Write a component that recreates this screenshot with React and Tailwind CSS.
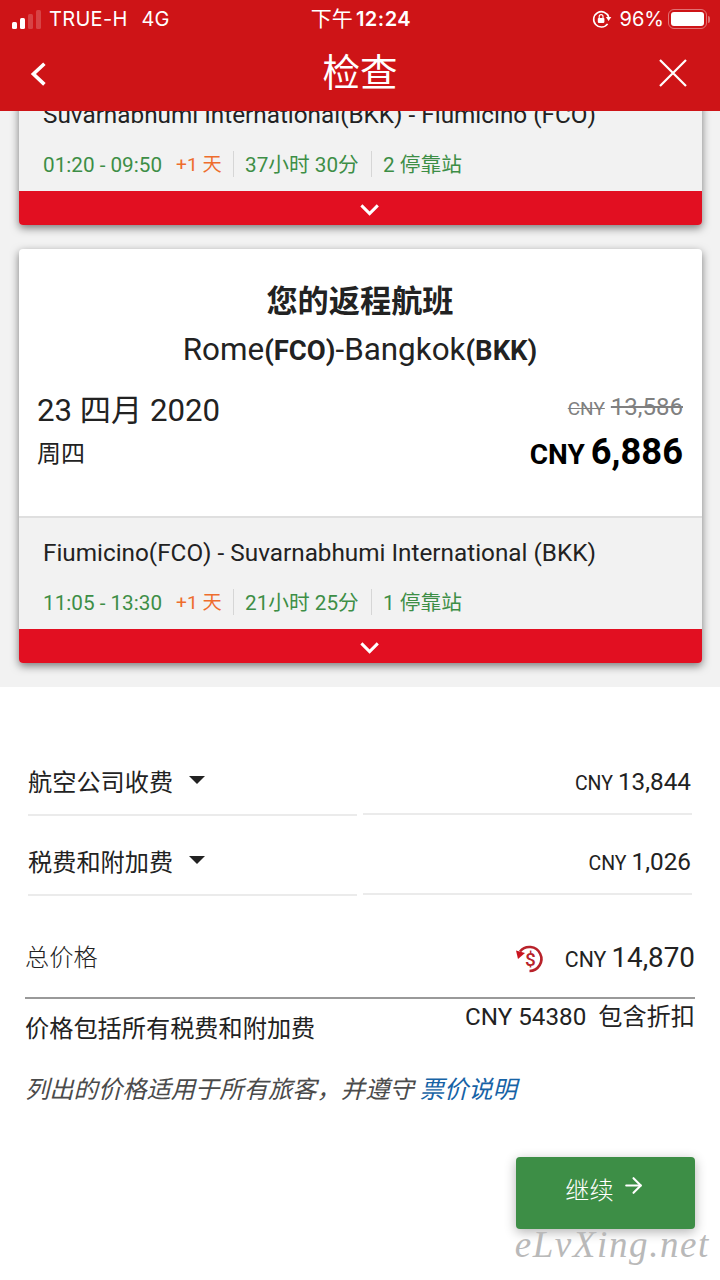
import { ArrowRight } from "lucide-react";

const flights = [
	{
		id: "outbound",
		route: "Suvarnabhumi International(BKK) - Fiumicino (FCO)",
		time: "01:20 - 09:50",
		duration: "37小时 30分",
		stops: "2 停靠站",
	},
	{
		id: "return",
		title: "您的返程航班",
		route: "Fiumicino(FCO) - Suvarnabhumi International (BKK)",
		time: "11:05 - 13:30",
		duration: "21小时 25分",
		stops: "1 停靠站",
	},
];

const fees = [
	{ label: "航空公司收费", amount: "13,844" },
	{ label: "税费和附加费", amount: "1,026" },
];

const StatusBar = () => (
	<div className="grid h-[37px] grid-cols-3 items-center pl-3 pr-[10px] font-['Inter','Noto_Sans_CJK_SC',sans-serif] text-[20px] leading-[37px]">
		<div className="flex items-center">
			<div className="flex h-[19px] items-end gap-[3px]">
				<span className="h-[7px] w-[5px] rounded-[1.5px] bg-white" />
				<span className="h-[11px] w-[5px] rounded-[1.5px] bg-white" />
				<span className="h-[15px] w-[5px] rounded-[1.5px] bg-white/20" />
				<span className="h-[19px] w-[5px] rounded-[1.5px] bg-white/20" />
			</div>
			<span className="ml-2 tracking-[0.3px]">TRUE-H</span>
			<span className="ml-[14px]">4G</span>
		</div>
		<div className="text-center font-semibold whitespace-nowrap">
			<span className="text-[21px] font-normal">下午</span> <span className="-ml-[2px] tracking-[0.5px]">12:24</span>
		</div>
		<div className="flex items-center justify-end">
			<svg className="mr-2 size-5" viewBox="0 0 20 20" fill="none">
				<path d="M15.6 14.9A7.7 7.7 0 1 1 16.7 8" stroke="white" strokeWidth="1.6" />
				<path d="M13.9 8h5.4l-2.7 4z" fill="white" />
				<rect x="5.8" y="8.9" width="6.6" height="5" rx="0.8" fill="white" />
				<path d="M7.2 9V7.6a1.9 1.9 0 0 1 3.8 0V9" stroke="white" strokeWidth="1.2" />
			</svg>
			<span>96%</span>
			<div className="ml-1 h-5 w-[39px] rounded-[6px] border-[1.5px] border-white/40 p-[2px]">
				<div className="h-full rounded-[3px] bg-white" />
			</div>
			<span className="ml-[1px] h-[7px] w-[2px] rounded-r-full bg-white/40" />
		</div>
	</div>
);

const Header = () => (
	<header className="h-[111px] bg-[#ce1417] text-white">
		<StatusBar />
		<div className="flex h-[73px] items-center justify-between pl-[30px] pr-[30px]">
			<svg className="mr-[18px] h-6 w-4" viewBox="0 0 16 24" fill="none" stroke="white" strokeWidth="3.6">
				<path d="M14.4 1.8L3.4 12l11 10.4" />
			</svg>
			<h1 className="text-[37.5px] leading-[73px]">检查</h1>
			<svg className="size-[34px]" viewBox="0 0 34 34" stroke="white" strokeWidth="2.2">
				<path d="M4 3l26 26M30 3L4 29" />
			</svg>
		</div>
	</header>
);

const Divider = () => <span className="h-[26px] w-px bg-[#d6d6d6]" />;

const FlightDetails = ({ flight }) => (
	<div className="h-[113px] border-t-2 border-[#dfdfdf] bg-[#f2f2f2] pl-6 pt-3">
		<p className="text-[24.3px] leading-[45px] whitespace-nowrap">{flight.route}</p>
		<div className="mt-[7px] flex h-[40px] items-center text-[20.7px] leading-[40px] whitespace-nowrap text-[#3d8e46]">
			<span className="w-[133px] pt-[2px]">{flight.time}</span>
			<span className="w-[57px] pt-[2px] text-[19.2px] text-[#ee6d2d]">+1 天</span>
			<Divider />
			<span className="w-[137px] pl-[11px] pt-[2px]">{flight.duration}</span>
			<Divider />
			<span className="pl-[11px] pt-[2px]">{flight.stops}</span>
		</div>
	</div>
);

const FlightCard = ({ flight }) => (
	<section className="overflow-hidden rounded-[4px] bg-white shadow-[0_3px_9px_rgba(0,0,0,0.5)]">
		{flight.title && (
			<div className="h-[267px] pl-[18px] pr-[19px] pt-[29px]">
				<h2 className="text-center text-[31.2px] leading-[48px] font-bold">{flight.title}</h2>
				<p className="text-center text-[31.4px] leading-[47px]">
					Rome<b className="text-[27.5px]">(FCO)</b>-Bangkok<b className="text-[27.5px]">(BKK)</b>
				</p>
				<div className="mt-[13px] flex justify-between">
					<div className="pt-[2px]">
						<p className="text-[31.2px] leading-[44px]">23 四月 2020</p>
						<p className="text-[24px] leading-[42px]">周四</p>
					</div>
					<div className="text-right">
						<p className="flex items-baseline justify-end gap-[6px] text-[24px] leading-[40px] text-[#808080]">
							<s className="text-[19px]">CNY</s>
							<s>13,586</s>
						</p>
						<p className="flex items-baseline justify-end gap-[6px] text-[36.3px] leading-[46px] font-bold text-black">
							<span className="text-[28px]">CNY</span>
							<span>6,886</span>
						</p>
					</div>
				</div>
			</div>
		)}
		<FlightDetails flight={flight} />
		<button className="flex h-[34px] w-full items-center justify-center pl-[18px] pt-[3px] bg-[#e20f21]">
			<svg className="h-3 w-5" viewBox="0 0 20 12" fill="none" stroke="white" strokeWidth="3">
				<path d="M1.4 1.4L9.6 9.6l8.2-8.2" />
			</svg>
		</button>
	</section>
);

const PriceBreakdown = () => (
	<div className="px-7 pt-[49px]">
		{fees.map((fee) => (
			<div key={fee.label} className="grid grid-cols-2 items-start gap-[6px] leading-[40px]">
				<div className="flex h-20 items-start border-b-2 border-[#ebebeb] pt-[27px] text-[24.2px]">
					{fee.label}
					<svg className="ml-4 mt-[13px] h-2 w-4" viewBox="0 0 16 8" fill="#222">
						<path d="M0 0h16L8 8z" />
					</svg>
				</div>
				<div className="flex h-[79px] items-baseline justify-end gap-[5px] border-b-2 border-[#ebebeb] pr-px pt-[26px] text-[24.3px]">
					<span className="text-[19.5px]">CNY</span>
					<span>{fee.amount}</span>
				</div>
			</div>
		))}
	</div>
);

const Total = () => (
	<div className="px-[25px]">
		<div className="flex h-[103px] items-start justify-between border-b-2 border-[#999] pt-[42px] leading-[40px]">
			<span className="text-[24.2px] font-light">总价格</span>
			<div className="flex items-start text-[27.8px]">
				<svg className="mr-5 mt-[6px] size-[30px]" viewBox="0 0 30 30" fill="none">
					<path d="M5 7.5A12 12 0 1 1 14.5 27" stroke="#b8222a" strokeWidth="2.6" />
					<path d="M1 6.5l9 2.5-7 6z" fill="#c9141f" />
					<text x="15.3" y="21.5" fontSize="19" fontWeight="500" textAnchor="middle" fill="#b8222a">$</text>
				</svg>
				<div className="flex items-baseline gap-[5px]">
					<span className="text-[21.3px]">CNY</span>
					<span>14,870</span>
				</div>
			</div>
		</div>
		<div className="flex h-[71px] justify-between text-[24.2px]">
			<span className="leading-[60px]">价格包括所有税费和附加费</span>
			<span className="leading-[36px] whitespace-pre">CNY 54380{"  "}包含折扣</span>
		</div>
		<p className="text-[24.3px] leading-[40px] italic text-[#4b4b4b]">
			列出的价格适用于所有旅客，并遵守 <a className="text-[#1763a6]">票价说明</a>
		</p>
	</div>
);

const App = () => (
	<div className="relative h-[1280px] w-[720px] overflow-hidden bg-white font-['Roboto','Noto_Sans_CJK_SC',sans-serif] text-[#222]">
		<Header />
		<main>
			<div className="h-[576px] overflow-hidden bg-[#f2f2f2] pl-[19px] pr-[18px]">
				<div className="-mt-[33px] flex flex-col gap-6">
					{flights.map((flight) => (
						<FlightCard key={flight.id} flight={flight} />
					))}
				</div>
			</div>
			<PriceBreakdown />
			<Total />
			<div className="flex justify-end pr-[25px] pt-[47px]">
				<button className="flex h-[72px] w-[179px] justify-center rounded-[4px] bg-[#3d8e46] text-[24.2px] leading-[68px] font-light text-white shadow-[0_3px_12px_rgba(0,0,0,0.3)]">
					继续
					<ArrowRight className="ml-[7px] mt-[16px] size-[25px]" strokeWidth={2} />
				</button>
			</div>
		</main>
		<span className="absolute right-[10px] top-[1223px] font-['Brush_Script_MT','Liberation_Serif',cursive] text-[37px] leading-[44px] tracking-[1.6px] italic text-[#b9b9b9]">
			eLvXing.net
		</span>
	</div>
);

export default App;
